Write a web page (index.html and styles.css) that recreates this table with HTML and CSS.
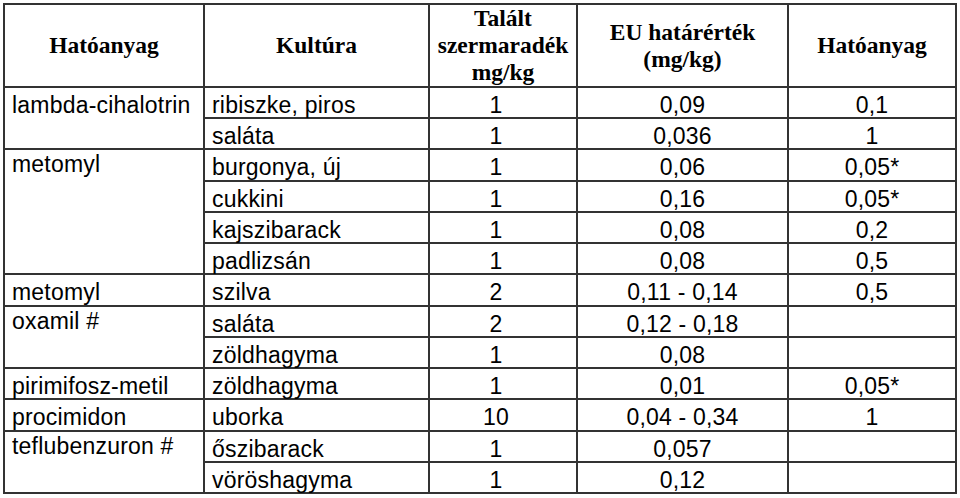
FILE: index.html
```html
<!DOCTYPE html>
<html lang="hu">
<head>
<meta charset="utf-8">
<title>Szermaradékok</title>
<link rel="stylesheet" href="styles.css">
</head>
<body>
<table class="res">
  <colgroup>
    <col class="c1"><col class="c2"><col class="c3"><col class="c4"><col class="c5">
  </colgroup>
  <thead>
    <tr class="head">
      <th>Hatóanyag</th>
      <th>Kultúra</th>
      <th class="found">Talált<br>szermaradék<br>mg/kg</th>
      <th>EU határérték<br>(mg/kg)</th>
      <th>Hatóanyag</th>
    </tr>
  </thead>
  <tbody>
    <tr class="r31">
      <td class="sub" rowspan="2">lambda-cihalotrin</td>
      <td class="crop">ribiszke, piros</td><td class="num found">1</td><td class="num">0,09</td><td class="num">0,1</td>
    </tr>
    <tr class="r31">
      <td class="crop">saláta</td><td class="num found">1</td><td class="num">0,036</td><td class="num">1</td>
    </tr>
    <tr class="r32">
      <td class="sub hi" rowspan="4">metomyl</td>
      <td class="crop">burgonya, új</td><td class="num found">1</td><td class="num">0,06</td><td class="num">0,05*</td>
    </tr>
    <tr class="r31">
      <td class="crop">cukkini</td><td class="num found">1</td><td class="num">0,16</td><td class="num">0,05*</td>
    </tr>
    <tr class="r31">
      <td class="crop">kajszibarack</td><td class="num found">1</td><td class="num">0,08</td><td class="num">0,2</td>
    </tr>
    <tr class="r31">
      <td class="crop">padlizsán</td><td class="num found">1</td><td class="num">0,08</td><td class="num">0,5</td>
    </tr>
    <tr class="r32">
      <td class="sub">metomyl</td>
      <td class="crop">szilva</td><td class="num found">2</td><td class="num">0,11 - 0,14</td><td class="num">0,5</td>
    </tr>
    <tr class="r31">
      <td class="sub hi" rowspan="2">oxamil #</td>
      <td class="crop">saláta</td><td class="num found">2</td><td class="num">0,12 - 0,18</td><td class="num"></td>
    </tr>
    <tr class="r31">
      <td class="crop">zöldhagyma</td><td class="num found">1</td><td class="num">0,08</td><td class="num"></td>
    </tr>
    <tr class="r31">
      <td class="sub">pirimifosz-metil</td>
      <td class="crop">zöldhagyma</td><td class="num found">1</td><td class="num">0,01</td><td class="num">0,05*</td>
    </tr>
    <tr class="r32">
      <td class="sub">procimidon</td>
      <td class="crop">uborka</td><td class="num found">10</td><td class="num">0,04 - 0,34</td><td class="num">1</td>
    </tr>
    <tr class="r31">
      <td class="sub hi" rowspan="2">teflubenzuron #</td>
      <td class="crop">őszibarack</td><td class="num found">1</td><td class="num">0,057</td><td class="num"></td>
    </tr>
    <tr class="r31">
      <td class="crop">vöröshagyma</td><td class="num found">1</td><td class="num">0,12</td><td class="num"></td>
    </tr>
  </tbody>
</table>
</body>
</html>
```

FILE: styles.css
```css
html, body {
  margin: 0;
  padding: 0;
  background: #ffffff;
}

body {
  padding: 3px 0 0 3px;
  color: #000;
  font-family: "Liberation Sans", Arial, sans-serif;
}

.res {
  border-collapse: separate;
  border-spacing: 0;
  table-layout: fixed;
  width: 954px;
  border-top: 2px solid #333;
  border-left: 2px solid #333;
}

.c1 { width: 200px; }
.c2 { width: 225px; }
.c3 { width: 148px; }
.c4 { width: 211px; }
.c5 { width: 168px; }

.res th,
.res td {
  box-sizing: border-box;
  border-right: 2px solid #333;
  border-bottom: 2px solid #333;
  padding: 0;
}

.head {
  height: 83px;
}

.res th {
  font-family: "Liberation Serif", "Times New Roman", serif;
  font-weight: bold;
  font-size: 23.5px;
  line-height: 27px;
  text-align: center;
  vertical-align: middle;
}

.r31 { height: 31px; }
.r32 { height: 32px; }

.res td {
  font-size: 23px;
  line-height: 24px;
  letter-spacing: 0.2px;
  vertical-align: top;
  padding-top: 5px;
  white-space: nowrap;
}

.res td.sub {
  padding-left: 7px;
  text-align: left;
}

.res td.sub.hi {
  padding-top: 2px;
}

.res td.crop {
  padding-left: 7px;
  text-align: left;
}

.res td.num {
  text-align: center;
}

.res .found {
  padding-right: 14px;
}

.res th.found {
  padding-right: 0;
}
```
